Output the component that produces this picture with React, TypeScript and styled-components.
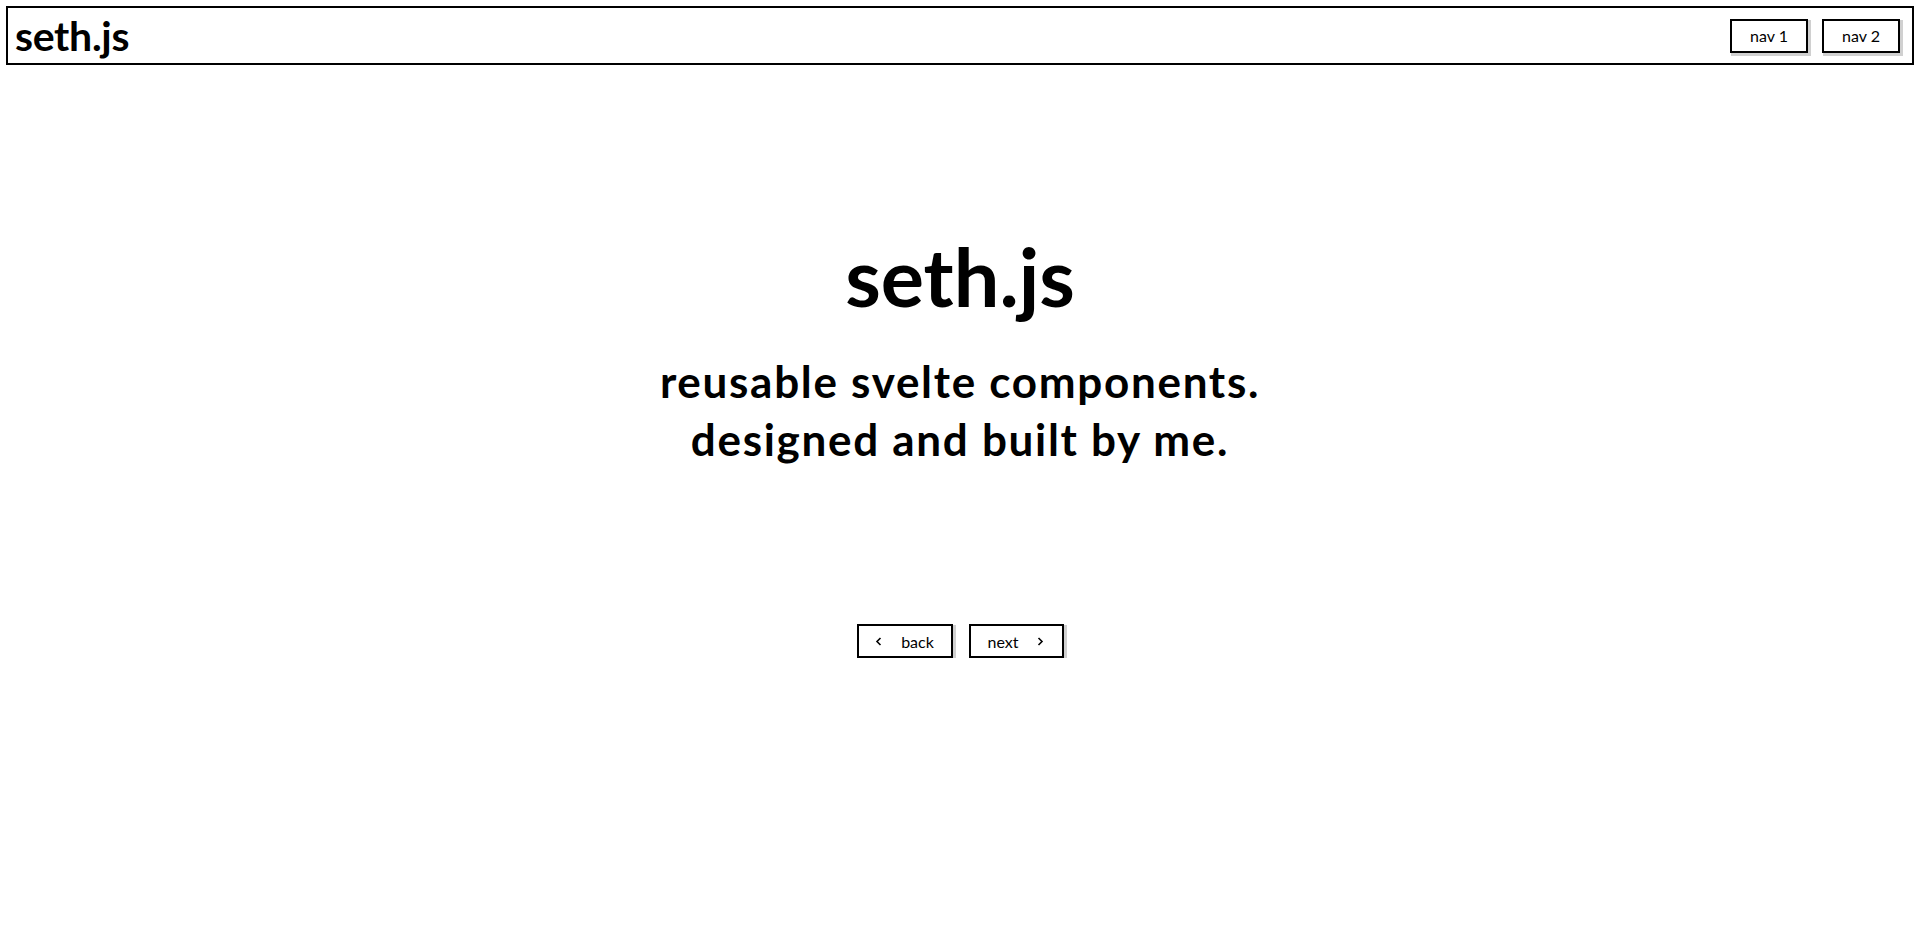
import React from "react";
import styled, { createGlobalStyle } from "styled-components";

const GlobalStyle = createGlobalStyle`
  html, body {
    margin: 0;
    padding: 0;
    background: #ffffff;
    color: #000000;
    font-family: Lato, "Open Sans", sans-serif;
  }
  * { box-sizing: border-box; }
`;

const Header = styled.header`
  margin: 6px;
  height: 59px;
  border: 2px solid #000;
  display: flex;
  align-items: center;
  justify-content: space-between;
  padding: 0 12px 0 7px;
`;

const Brand = styled.div`
  font-size: 41px;
  font-weight: 700;
  line-height: 1;
  letter-spacing: -0.3px;
`;

const Nav = styled.nav`
  display: flex;
  gap: 14px;
`;

const Button = styled.button<{ $wide?: number }>`
  font-family: Lato, "Open Sans", sans-serif;
  font-size: 16px;
  color: #000;
  background: #fff;
  border: 2px solid #000;
  box-shadow: 2px 2px 0 1px #d0d0d0;
  height: 34px;
  min-width: ${(p) => p.$wide ?? 0}px;
  padding: 0 16px;
  display: inline-flex;
  align-items: center;
  justify-content: center;
  gap: 19px;
  cursor: pointer;
`;

const Chevron = styled.svg`
  width: 7px;
  height: 9px;
  flex: none;
`;

const Main = styled.main`
  display: flex;
  flex-direction: column;
  align-items: center;
  text-align: center;
`;

const Title = styled.h1`
  margin: 157px 0 0;
  font-size: 81px;
  line-height: 96px;
  font-weight: 700;
`;

const Tagline = styled.h2`
  margin: 28px 0 0;
  font-size: 44px;
  line-height: 58px;
  font-weight: 700;
  letter-spacing: 1.7px;
`;

const Controls = styled.div`
  margin-top: 156px;
  display: flex;
  gap: 16px;
`;

const Left = () => (
  <Chevron viewBox="0 0 7 9" fill="none" stroke="#000" strokeWidth={1.6}>
    <polyline points="5.5,1 2,4.5 5.5,8" />
  </Chevron>
);

const Right = () => (
  <Chevron viewBox="0 0 7 9" fill="none" stroke="#000" strokeWidth={1.6}>
    <polyline points="1.5,1 5,4.5 1.5,8" />
  </Chevron>
);

export default function App() {
  return (
    <>
      <GlobalStyle />
      <Header>
        <Brand>seth.js</Brand>
        <Nav>
          <Button $wide={78}>nav 1</Button>
          <Button $wide={78}>nav 2</Button>
        </Nav>
      </Header>
      <Main>
        <Title>seth.js</Title>
        <Tagline>
          reusable svelte components.
          <br />
          designed and built by me.
        </Tagline>
        <Controls>
          <Button $wide={96}>
            <Left />
            back
          </Button>
          <Button $wide={95}>
            next
            <Right />
          </Button>
        </Controls>
      </Main>
    </>
  );
}
